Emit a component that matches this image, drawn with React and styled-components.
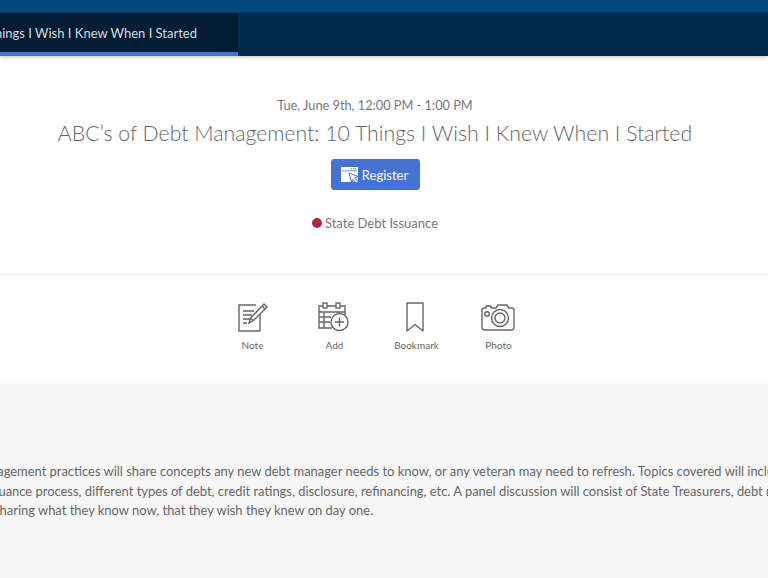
import React from "react";
import styled, { createGlobalStyle } from "styled-components";

const Global = createGlobalStyle`
  html, body { margin: 0; padding: 0; background: #fff; }
  body { font-family: Lato, "Open Sans", sans-serif; overflow: hidden; }
`;
const Page = styled.div`
  width: 768px; height: 578px; overflow: hidden; display: flex; flex-direction: column;
`;
const TopBar = styled.div`
  height: 13px; flex: none; background: #03477c;
`;
const TabBar = styled.div`
  height: 43px; flex: none; background: #032a4b; display: flex; box-shadow: 0 1px 4px rgba(0,0,0,.25);
  position: relative;
`;
const Tab = styled.div`
  width: 238px; height: 43px; box-sizing: border-box; background: #011c33; border-bottom: 4px solid #4673d3;
  display: flex; justify-content: flex-end; align-items: center; padding: 1px 41px 0 0;
  color: #d5dbe0; font-size: 13px; white-space: nowrap; overflow: hidden;
`;
const Hero = styled.section`
  height: 218px; flex: none; display: flex; flex-direction: column; align-items: center;
  width: 750px; box-sizing: border-box; padding-top: 40px; color: #777;
`;
const DateLine = styled.div`
  font-size: 12.75px; line-height: 18px;
`;
const Title = styled.h1`
  margin: 4px 0 0; font-weight: 300; font-size: 21.25px; line-height: 30px; color: #666; white-space: nowrap;
`;
const RegisterButton = styled.button`
  margin-top: 11px; width: 89px; height: 31px; border: 1px solid #4673d3; border-radius: 3px; background: #4673d3;
  color: #fff; font: 400 13px Lato, sans-serif; display: flex; align-items: center; justify-content: center; gap: 2px; padding: 0 1px 0 0;
`;
const Tag = styled.div`
  margin-top: 24px; display: flex; align-items: center; gap: 3px; font-size: 13px; line-height: 18px; color: #777;
`;
const Dot = styled.span`
  width: 10px; height: 10px; border-radius: 50%; background: #ad2a3c;
`;
const Actions = styled.section`
  height: 109px; flex: none; border-top: 1px solid #eaeaea; box-sizing: border-box; padding-top: 24px;
  display: flex; justify-content: flex-start; padding-left: 217px;
`;
const Action = styled.div`
  width: ${p => p.$w}px; display: flex; flex-direction: column; align-items: center; color: #666; font-size: 10px;
`;
const IconSlot = styled.div`
  height: 36px; display: flex; align-items: center; justify-content: center;
  margin-right: ${p => p.$nudge || 0}px;
  svg { display: block; fill: none; stroke: #666; stroke-width: 1.4; }
`;
const ActionLabel = styled.div`
  margin-top: 3px; line-height: 14px;
`;
const About = styled.section`
  flex: 1; background: #f7f7f7; padding-top: 79px; overflow: hidden;
`;
const Line = styled.p`
  margin: 0 0 0 ${p => p.$shift}px; font-size: 12.93px; line-height: 19.5px; color: #666; white-space: nowrap;
`;
const RegisterGlyph = styled.svg`
  display: block; flex: none;
`;

const RegisterIcon = () => (
  <RegisterGlyph width="19" height="18" viewBox="0 0 19 18">
    <rect x="0" y="1" width="17" height="15" rx="0.5" fill="#fff" />
    <path fill="#4673d3" d="M1 4.500h15v0.800H1zM10 2.200h1v1h-1zM12 2.200h1v1h-1zM14 2.200h1v1h-1z" />
    <path fill="#fff" stroke="#4673d3" strokeWidth="1" d="M8 7l9 3.500-3.400 1.500 3.400 3.500-1.600 1.600-3.400-3.500L11 17z" />
  </RegisterGlyph>
);

export default function App() {
  return (
    <Page>
      <Global />
      <TopBar />
      <TabBar>
        <Tab>ABC’s of Debt Management: 10 Things I Wish I Knew When I Started</Tab>
      </TabBar>
      <Hero>
        <DateLine>Tue, June 9th, 12:00 PM - 1:00 PM</DateLine>
        <Title>ABC’s of Debt Management: 10 Things I Wish I Knew When I Started</Title>
        <RegisterButton><RegisterIcon />Register</RegisterButton>
        <Tag><Dot />State Debt Issuance</Tag>
      </Hero>
      <Actions>
        <Action $w={71}>
          <IconSlot>
            <svg width="30" height="30" viewBox="0 0 30 30">
              <path d="M22 12v17H1V3h17" />
              <path d="M5 9h11M5 13h9M5 17h7M5 21h4" />
              <path d="M11 21l1.500-5L26 2l3 3-13.500 13.500z" />
              <path d="M12.500 16l3 2.500M24 4l3 3" />
            </svg>
          </IconSlot>
          <ActionLabel>Note</ActionLabel>
        </Action>
        <Action $w={93}>
          <IconSlot $nudge={3}>
            <svg width="31" height="30" viewBox="0 0 31 30">
              <path d="M14 26H1V4h26v9" />
              <path d="M1 10h26M1 15h12M1 20h11M6 10v16" />
              <rect x="5" y="1" width="4" height="5" fill="#fff" />
              <rect x="18" y="1" width="4" height="5" fill="#fff" />
              <circle cx="21.500" cy="20" r="8.500" fill="#fff" />
              <path d="M21.500 15.500v9M17 20h9" />
            </svg>
          </IconSlot>
          <ActionLabel>Add</ActionLabel>
        </Action>
        <Action $w={71}>
          <IconSlot $nudge={3}>
            <svg width="18" height="30" viewBox="0 0 18 30">
              <path d="M1 1h16v28l-8-6.500-8 6.500z" strokeLinejoin="round" />
            </svg>
          </IconSlot>
          <ActionLabel>Bookmark</ActionLabel>
        </Action>
        <Action $w={93}>
          <IconSlot $nudge={2}>
            <svg width="34" height="27" viewBox="0 0 34 27">
              <path d="M3 4h2V2h5v2h5l2-3h9l2 3h3a2 2 0 0 1 2 2v17a3 3 0 0 1-3 3H4a3 3 0 0 1-3-3V6a2 2 0 0 1 2-2z" strokeLinejoin="round" />
              <circle cx="19" cy="14" r="8.500" />
              <circle cx="19" cy="14" r="5" />
              <circle cx="6" cy="10" r="2.300" />
            </svg>
          </IconSlot>
          <ActionLabel>Photo</ActionLabel>
        </Action>
      </Actions>
      <About>
        <Line $shift={-116}>Experts in debt management practices will share concepts any new debt manager needs to know, or any veteran may need to refresh. Topics covered will include</Line>
        <Line $shift={-45}>debt issuance process, different types of debt, credit ratings, disclosure, refinancing, etc. A panel discussion will consist of State Treasurers, debt managers</Line>
        <Line $shift={-6}>sharing what they know now, that they wish they knew on day one.</Line>
      </About>
    </Page>
  );
}
